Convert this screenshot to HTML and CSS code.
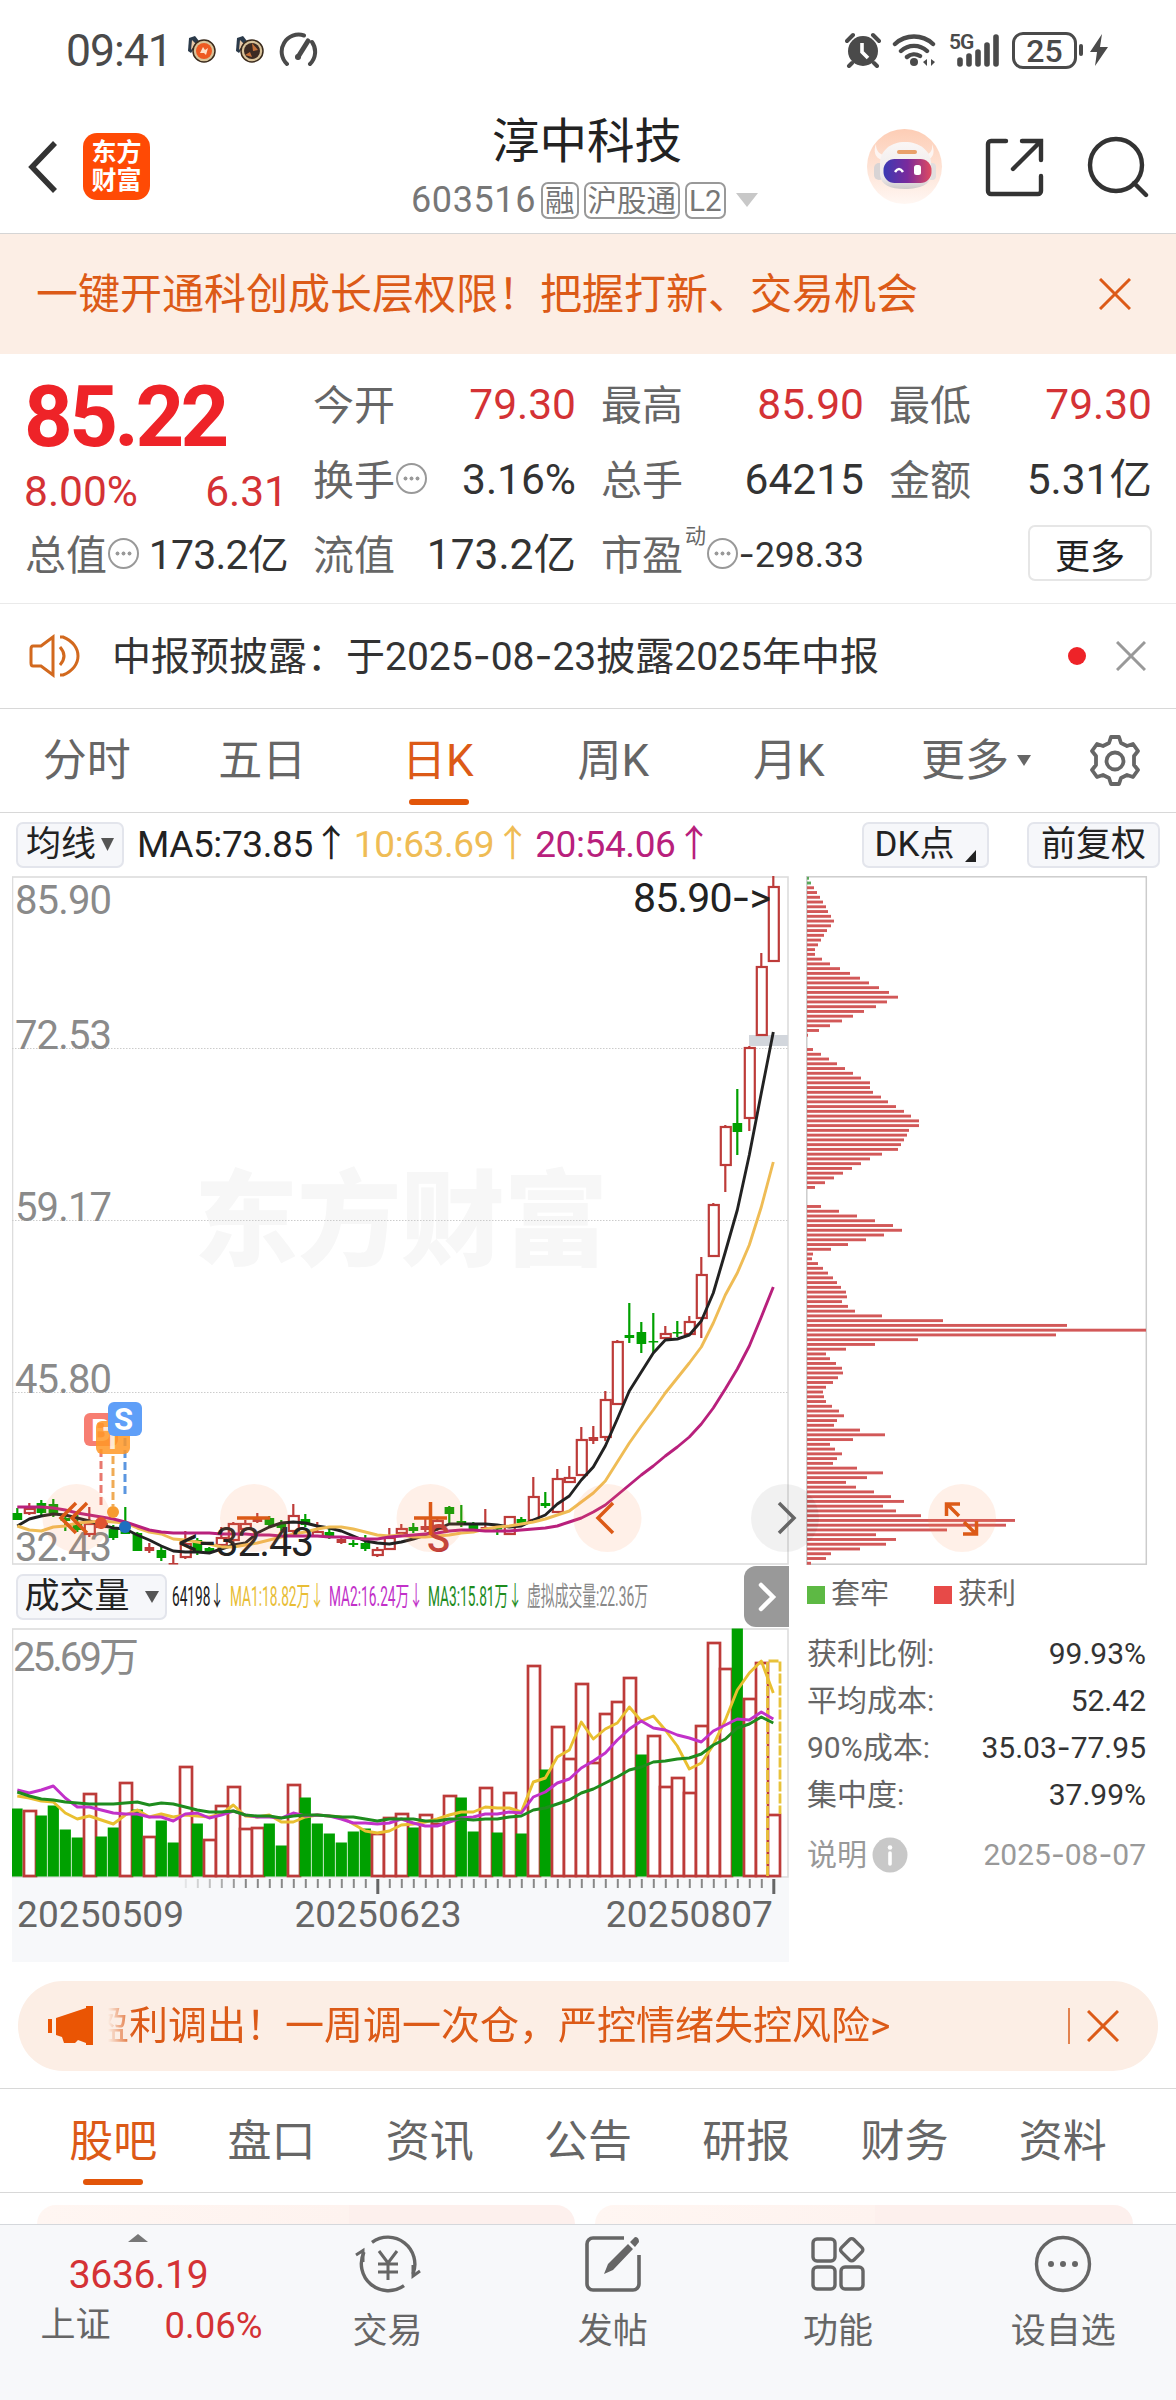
FILE: index.html
```
<!DOCTYPE html>
<html lang="zh-CN">
<head>
    <meta charset="UTF-8">
    <meta name="viewport" content="width=device-width, initial-scale=1.0">
    <title>淳中科技 603516</title>
    <link rel="stylesheet" href="styles.css">
</head>
<body>
    <div class="status-bar">
        <span class="time">09:41</span>
        <svg class="app-icon" width="30" height="28" viewBox="0 0 30 28">
            <path d="M2 2l6-2 4 5-8 12-3-2z" fill="#2b3a4a"/><path d="M5 4l4 4-5 6z" fill="#e8c9a8"/>
            <circle cx="17" cy="15" r="11" fill="#d9c39a" stroke="#3a2a1c" stroke-width="1.5"/>
            <circle cx="17" cy="15" r="8" fill="#ee5a22"/><path d="M13 17l3-6 2 3 3-2-2 7-2-2z" fill="#ffe0c8"/>
        </svg>
        <svg class="app-icon" width="30" height="28" viewBox="0 0 30 28">
            <path d="M2 2l6-2 4 5-8 12-3-2z" fill="#2b3a4a"/><path d="M5 4l4 4-5 6z" fill="#e8c9a8"/>
            <circle cx="17" cy="15" r="11" fill="#d9c39a" stroke="#3a2a1c" stroke-width="1.5"/>
            <circle cx="17" cy="15" r="8" fill="#3c2a22"/><path d="M10 19l5-3 2 5zM17 7l6 7-5 1z" fill="#c5713a"/>
        </svg>
        <svg width="40" height="36" viewBox="0 0 40 36" fill="none" stroke="#4a4a4a" stroke-width="4" stroke-linecap="round">
            <path d="M8 32A17 17 0 0 1 25 3.5M33 10a17 17 0 0 1-2 22"/><path d="M29 9L19 25" stroke-width="5"/><circle cx="19" cy="25" r="3" fill="#4a4a4a" stroke="none"/>
        </svg>
        <div class="status-right">
            <svg width="36" height="36" viewBox="0 0 36 36">
                <circle cx="18" cy="19" r="15" fill="#4a4a4a"/><path d="M2 9l6-6M34 9l-6-6M7 31l-3 3M29 31l3 3" stroke="#4a4a4a" stroke-width="4" stroke-linecap="round"/>
                <path d="M17 11v9l6 6" fill="none" stroke="#fff" stroke-width="3.6"/>
            </svg>
            <svg width="46" height="36" viewBox="0 0 46 36" fill="none" stroke="#4a4a4a" stroke-width="4.4" stroke-linecap="round">
                <path d="M3 12a28 28 0 0 1 38 0M9 19a19 19 0 0 1 26 0M15 25a11 11 0 0 1 13-1"/><circle cx="22" cy="30" r="4" fill="#4a4a4a" stroke="none"/>
                <path d="M31 30l4-3v7zM43 30l-4-3v7z" fill="#4a4a4a" stroke="none"/>
            </svg>
            <div class="signal">
                <span class="net">5G</span>
                <svg width="54" height="36" viewBox="0 0 54 36" stroke="#4a4a4a" stroke-width="5.6" stroke-linecap="round">
                    <path d="M13 28v4M22 24v8M31 20v12M40 13v19M49 5v27"/>
                </svg>
            </div>
            <div class="battery">25</div>
            <svg width="30" height="36" viewBox="0 0 30 36"><path d="M3 14v8" stroke="#4a4a4a" stroke-width="4" stroke-linecap="round"/><path d="M24 2L12 20h7l-2 14 13-19h-8z" fill="#4a4a4a"/></svg>
        </div>
    </div>

    <header class="header">
        <svg class="back" width="30" height="54" viewBox="0 0 30 54"><path d="M27 3L4 27l23 24" fill="none" stroke="#333" stroke-width="5.5"/></svg>
        <div class="logo"><span>东方</span><span>财富</span></div>
        <div class="title">
            <h1>淳中科技</h1>
            <div class="subtitle">
                <span class="code">603516</span>
                <span class="badge">融</span>
                <span class="badge">沪股通</span>
                <span class="badge">L2</span>
                <svg width="22" height="14" viewBox="0 0 22 14"><path d="M0 0h22L11 14z" fill="#c8c8c8"/></svg>
            </div>
        </div>
        <div class="header-actions">
            <svg width="76" height="76" viewBox="0 0 76 76">
                <defs>
                    <linearGradient id="halo" x1="0" y1="0" x2="0" y2="1"><stop offset="0" stop-color="#fdcdb5"/><stop offset="1" stop-color="#fff7f3"/></linearGradient>
                    <linearGradient id="visor" x1="0" y1="0" x2="1" y2="0"><stop offset="0" stop-color="#3a3ab4"/><stop offset=".5" stop-color="#7a2a9c"/><stop offset="1" stop-color="#e04a60"/></linearGradient>
                    <linearGradient id="head" x1="0" y1="0" x2="0" y2="1"><stop offset="0" stop-color="#faf6f5"/><stop offset=".75" stop-color="#eeeaea"/><stop offset="1" stop-color="#cfcaca"/></linearGradient>
                </defs>
                <circle cx="37.5" cy="37.5" r="37.5" fill="url(#halo)"/>
                <path d="M9 15c0 7 3 10 10 12l-4 4c-7-2-9-9-6-16zM65 15c1 7-2 10-9 12l4 4c7-2 8-9 5-16z" fill="#fdf5f2"/>
                <rect x="7" y="34" width="10" height="17" rx="5" fill="#d8d4d5"/><rect x="60" y="34" width="9" height="17" rx="4" fill="#e2dede"/>
                <path d="M38 13c14 0 25 8 26 20v13c0 9-11 14-26 14S14 56 13 46V33c1-12 11-20 25-20z" fill="url(#head)"/>
                <rect x="30" y="21" width="20" height="4" rx="2" fill="#e9a06a"/>
                <rect x="16.5" y="30" width="48" height="24" rx="11" fill="url(#visor)"/>
                <path d="M28 43q4-6 8 0" stroke="#fff" stroke-width="2.5" fill="none"/><rect x="47" y="36" width="7" height="10" rx="2.500" fill="#fff"/>
            </svg>
            <svg width="60" height="60" viewBox="0 0 60 60" fill="none" stroke="#333" stroke-width="4.4" stroke-linecap="round">
                <path d="M22 4H7a3 3 0 0 0-3 3v47a3 3 0 0 0 3 3h47a3 3 0 0 0 3-3V39"/><path d="M38 4h19v19M57 4L29 32"/>
            </svg>
            <svg width="62" height="62" viewBox="0 0 62 62" fill="none" stroke="#333" stroke-width="4.4" stroke-linecap="round"><circle cx="29" cy="29" r="26"/><path d="M47 47l12 12"/></svg>
        </div>
    </header>

    <div class="banner">
        <span>一键开通科创成长层权限！把握打新、交易机会</span>
        <svg width="32" height="32" viewBox="0 0 32 32"><path d="M1 1l30 30M31 1L1 31" stroke="#dc5a17" stroke-width="3"/></svg>
    </div>

    <section class="quote">
        <div class="price-box">
            <div class="price">85.22</div>
            <div class="change"><span>8.00%</span><span>6.31</span></div>
        </div>
        <div class="cell"><label>今开</label><b class="red">79.30</b></div>
        <div class="cell"><label>最高</label><b class="red">85.90</b></div>
        <div class="cell"><label>最低</label><b class="red">79.30</b></div>
        <div class="cell"><label>换手</label><i class="tip"></i><b>3.16%</b></div>
        <div class="cell"><label>总手</label><b>64215</b></div>
        <div class="cell"><label>金额</label><b>5.31亿</b></div>
        <div class="cell"><label>总值</label><i class="tip"></i><b class="tight">173.2亿</b></div>
        <div class="cell"><label>流值</label><b>173.2亿</b></div>
        <div class="cell"><label>市盈</label><sup>动</sup><i class="tip"></i><b class="small"><s>-</s>298.33</b></div>
        <div class="cell end"><button class="more-btn">更多</button></div>
    </section>

    <div class="notice">
        <svg width="52" height="44" viewBox="0 0 52 44" fill="none" stroke="#d2691e" stroke-width="3">
            <path d="M24 3L12 12H4q-2 0-2 3v14q0 3 2 3h8l12 9z"/><path d="M31 13q8 9 0 18M31 3h3c20 8 20 30 0 38h-3"/>
        </svg>
        <span class="notice-text">中报预披露：于2025<s>-</s>08<s>-</s>23披露2025年中报</span>
        <i class="dot"></i>
        <svg width="30" height="30" viewBox="0 0 30 30"><path d="M1 1l28 28M29 1L1 29" stroke="#999" stroke-width="3"/></svg>
    </div>

    <nav class="period-tabs">
        <span>分时</span>
        <span>五日</span>
        <span class="active">日K</span>
        <span>周K</span>
        <span>月K</span>
        <span class="wide">更多<svg width="14" height="11" viewBox="0 0 14 11"><path d="M0 0h14L7 11z" fill="#666"/></svg></span>
        <svg class="gear" width="54" height="54" viewBox="0 0 54 54" fill="none" stroke="#666" stroke-width="3.8" stroke-linejoin="round">
            <path d="M23 3h8l2 6 6 3 6-2 5 7-4 5v9l4 5-5 7-6-2-6 3-2 6h-8l-2-6-6-3-6 2-5-7 4-5v-9l-4-5 5-7 6 2 6-3z"/><circle cx="27" cy="27" r="8.5"/>
        </svg>
    </nav>

    <div class="ma-row">
        <button class="chip-btn ma-btn">均线<svg width="13" height="13" viewBox="0 0 13 13"><path d="M0 0h13L6.500 13z" fill="#555"/></svg></button>
        <span class="ma ma5">MA5:73.85<u>↑</u></span>
        <span class="ma ma10">10:63.69<u>↑</u></span>
        <span class="ma ma20">20:54.06<u>↑</u></span>
        <button class="chip-btn dk-btn">DK点<svg width="11" height="12" viewBox="0 0 11 12"><path d="M11 0v12H0z" fill="#222"/></svg></button>
        <button class="chip-btn fq-btn">前复权</button>
    </div>

    <div class="charts">
        <div class="left">
            <svg id="kline" width="777" height="689" viewBox="0 0 777 689"></svg>
            <div class="vol-head">
                <button class="chip-btn vol-btn">成交量<svg width="14" height="12" viewBox="0 0 14 12"><path d="M0 0h14L7 12z" fill="#555"/></svg></button>
                <svg class="vol-info" width="500" height="40" viewBox="0 0 500 40">
                    <text x="0" y="29" textLength="52" lengthAdjust="spacingAndGlyphs" fill="#222">64198↓</text>
                    <text x="58" y="29" textLength="94" lengthAdjust="spacingAndGlyphs" fill="#e8bd35">MA1:18.82万↓</text>
                    <text x="157" y="29" textLength="94" lengthAdjust="spacingAndGlyphs" fill="#c231c9">MA2:16.24万↓</text>
                    <text x="256" y="29" textLength="94" lengthAdjust="spacingAndGlyphs" fill="#1e8c1e">MA3:15.81万↓</text>
                    <text x="355" y="29" textLength="121" lengthAdjust="spacingAndGlyphs" fill="#888">虚拟成交量:22.36万</text>
                </svg>
                <div class="next"><svg width="20" height="30" viewBox="0 0 20 30"><path d="M4 3l12 12L4 27" fill="none" stroke="#fff" stroke-width="4.500" stroke-linecap="round"/></svg></div>
            </div>
            <svg id="volume" width="777" height="250" viewBox="0 0 777 250"></svg>
            <div class="dates">
                <svg id="ticks" width="777" height="18" viewBox="0 0 777 18"></svg>
                <div class="date-labels"><span>20250509</span><span>20250623</span><span>20250807</span></div>
            </div>
        </div>
        <div class="right">
            <svg id="chips" width="342" height="689" viewBox="0 0 342 689"></svg>
            <div class="legend"><i class="g"></i><span>套牢</span><i class="r"></i><span>获利</span></div>
            <div class="stat"><label>获利比例:</label><span>99.93%</span></div>
            <div class="stat"><label>平均成本:</label><span>52.42</span></div>
            <div class="stat"><label>90%成本:</label><span>35.03<s>-</s>77.95</span></div>
            <div class="stat"><label>集中度:</label><span>37.99%</span></div>
            <div class="stat note"><label>说明</label><svg width="36" height="36" viewBox="0 0 36 36"><circle cx="18" cy="18" r="17.500" fill="#c8c8c8"/><circle cx="18" cy="10.500" r="2.300" fill="#fff"/><path d="M18 16v11" stroke="#fff" stroke-width="3.600" stroke-linecap="round"/></svg><span>2025<s>-</s>08<s>-</s>07</span></div>
        </div>
        <!-- floating chart controls -->
        <svg class="controls" width="1176" height="80" viewBox="0 0 1176 80" fill="none" stroke="#dc5a17" stroke-width="3.500">
            <g fill="#ff8a4c" fill-opacity=".13" stroke="none">
                <circle cx="76.500" cy="40" r="34"/><circle cx="254" cy="40" r="34"/><circle cx="430.500" cy="40" r="34"/><circle cx="607.500" cy="40" r="34"/><circle cx="962" cy="40" r="34"/>
                <circle cx="785" cy="40" r="34" fill="#000" fill-opacity=".055"/>
            </g>
            <path d="M76 25L61 40l15 15M87 25L72 40l15 15M237 40h33M414 40h33M430.500 24v33M613 25l-15 15 15 15"/>
            <path d="M779 25l15 15-15 15" stroke="#666"/>
            <path d="M946.500 38V26H960M947 26l12 12M964 44l12 12M963 56h13.500V43" stroke-width="3.500"/>
        </svg>
    </div>

    <div class="promo">
        <svg width="48" height="40" viewBox="0 0 48 40" fill="#ea5504"><path d="M0 13h4v14H0zM8 12L38 2V0h7v39h-7v-2l-8-3-3 3H16l-2-6-6-2z"/></svg>
        <div class="promo-text"><span>盈利调出！一周调一次仓，严控情绪失控风险&gt;</span></div>
        <i class="divider"></i>
        <svg width="32" height="32" viewBox="0 0 32 32"><path d="M1 1l30 30M31 1L1 31" stroke="#dc5a17" stroke-width="3"/></svg>
    </div>

    <nav class="info-tabs">
        <span class="active">股吧</span>
        <span>盘口</span>
        <span>资讯</span>
        <span>公告</span>
        <span>研报</span>
        <span>财务</span>
        <span>资料</span>
    </nav>

    <div class="cards"><div class="card"></div><div class="card"></div></div>

    <footer class="bottom-bar">
        <div class="index">
            <svg width="20" height="8" viewBox="0 0 20 8"><path d="M10 0l10 8H0z" fill="#777"/></svg>
            <div class="index-value">3636.19</div>
            <div class="index-row"><label>上证</label><span>0.06%</span></div>
        </div>
        <div class="item">
            <svg width="66" height="58" viewBox="0 0 66 58" fill="none" stroke="#666" stroke-width="3.400">
                <path d="M17 7.300A27 27 0 0 1 58 39M49 50.700A27 27 0 0 1 9 17"/><path d="M1 20l7-4.500V27M65 36l-7 5V30" stroke-width="3"/><path d="M24 16l9 12 9-12M33 28v17M23 29h20M23 37h20" stroke-width="3"/>
            </svg>
            <span>交易</span>
        </div>
        <div class="item">
            <svg width="58" height="58" viewBox="0 0 58 58" fill="none" stroke="#666" stroke-width="3.600">
                <path d="M40 3H9a6 6 0 0 0-6 6v40a6 6 0 0 0 6 6h40a6 6 0 0 0 6-6V20"/>
                <path d="M20 39l4-10 20-20 5 5-20 21zM46 7l5-5q4 0 4 5l-4 5z" fill="#666" stroke="none"/>
            </svg>
            <span>发帖</span>
        </div>
        <div class="item">
            <svg width="54" height="54" viewBox="0 0 54 54" fill="none" stroke="#666" stroke-width="3.400">
                <rect x="2" y="2" width="22" height="22" rx="4"/><rect x="2" y="30" width="22" height="22" rx="4"/><rect x="30" y="30" width="22" height="22" rx="4"/><rect x="32" y="4" width="17.500" height="17.500" rx="3" transform="rotate(45 40.700 12.700)"/>
            </svg>
            <span>功能</span>
        </div>
        <div class="item">
            <svg width="58" height="58" viewBox="0 0 58 58"><circle cx="29" cy="29" r="26.500" fill="none" stroke="#666" stroke-width="3.400"/><g fill="#666"><circle cx="17" cy="29" r="3"/><circle cx="29" cy="29" r="3"/><circle cx="41" cy="29" r="3"/></g></svg>
            <span>设自选</span>
        </div>
    </footer>

    <script>
        const RED = '#bd3b39', GREEN = '#00a000';
        const STEP = 12, X0 = 5.3;
        const cx = i => X0 + STEP * i;

        // [direction, high, body top, body bottom, low]
        const candles = [
            ['g',632,637,644,644],['r',627,632,637,639],['g',624,627,637,639],['g',623,628,637,641],['g',640,642,645,655],
            ['g',639,647,654,656],['r',631,647,658,661],['r',642,646,651,653],['g',649,653,662,664],['g',631,651,658,658],
            ['g',656,657,675,675],['r',667,671,675,677],['g',671,674,682,685],['r',679,687,688,688],['r',655,667,681,683],
            ['g',662,664,677,679],['g',671,672,676,677],['r',651,661,669,671],['r',646,647,664,667],['r',644,647,653,655],
            ['r',637,643,646,647],['g',640,642,649,651],['g',644,647,652,655],['r',628,639,655,657],['g',638,643,649,651],
            ['r',646,655,660,661],['g',653,656,660,663],['r',661,663,667,668],['g',664,667,669,671],['g',659,667,673,675],
            ['r',671,673,679,681],['r',652,661,673,673],['r',648,652,657,659],['g',647,651,655,657],['r',641,650,654,656],
            ['r',641,644,653,655],['g',630,631,638,648],['g',629,645,649,651],['g',646,649,653,655],['r',633,651,652,653],
            ['g',651,652,653,659],['r',640,640,658,659],['g',641,643,647,648],['r',601,620,644,647],['g',616,627,630,632],
            ['r',593,602,636,637],['r',590,601,606,607],['r',551,563,599,600],['r',550,561,565,568],['r',515,523,561,565],
            ['r',464,465,528,528],['g',427,459,462,467],['g',446,456,468,477],['g',437,465,466,477],['r',450,457,462,463],
            ['g',445,456,457,461],['r',440,445,458,459],['r',381,398,442,462],['r',327,328,380,380],['r',249,250,289,316],
            ['g',213,247,256,279],['r',170,171,242,255],['r',77,90,159,159],['r',0,10,85,85]
        ];

        const ma5 = [650,643,640,638,639,642,645,649,652,653,659,664,670,675,676,676,677,673,669,667,657,651,647,646,647,650,652,655,660,665,667,668,666,663,659,653,648,648,648,648,649,651,650,644,639,628,620,604,591,570,543,515,496,477,464,463,459,445,417,376,334,279,217,156];
        const ma10 = [650,654,655,651,650,647,646,645,646,647,652,656,658,663,664,666,668,671,671,669,667,664,661,658,656,653,651,651,653,656,659,660,659,661,661,660,659,657,656,653,651,650,648,646,643,639,635,626,617,605,586,567,550,534,517,502,487,471,447,419,397,369,331,286];
        const ma20 = [631,631,631,632,634,637,639,641,643,646,650,654,656,657,657,657,657,658,658,658,659,659,660,660,660,660,661,661,662,663,663,661,660,659,658,657,655,654,654,655,655,655,654,653,652,650,646,642,636,629,619,609,599,590,580,571,561,548,532,513,493,470,441,411];

        const volColors = 'grggggrggrgrggrgrrrrrggrggggggrrrgrrrggrgrgrgrrrrrrrgrrrrrrrgrrr';
        const volumes = [68,66,61,71,47,39,83,40,49,94,67,40,56,34,110,53,37,71,90,48,49,53,31,92,79,53,43,34,45,48,43,59,63,49,62,53,81,79,45,89,44,84,43,211,107,150,118,193,114,163,175,199,122,141,90,99,84,151,234,208,248,178,214,62];
        const vma1 = [168,170,173,174,185,191,188,192,196,187,182,189,186,189,187,188,189,186,177,188,189,187,194,194,189,187,188,189,196,203,205,203,197,196,194,191,187,184,184,179,180,180,184,154,150,129,122,94,111,101,95,79,93,88,102,118,141,135,117,92,62,45,33,65];
        const vma2 = [162,165,162,158,170,179,179,182,185,186,186,189,189,193,186,185,190,187,183,187,189,189,190,185,188,187,188,191,195,195,196,195,191,195,198,198,194,190,189,186,186,184,185,169,164,155,151,140,133,125,112,101,93,100,102,107,110,114,103,97,91,92,84,91];
        const vma3 = [164,168,171,172,174,175,176,176,176,175,174,177,175,176,179,182,184,184,183,187,188,188,190,188,187,187,188,189,189,191,193,191,191,191,193,193,191,191,192,191,191,189,188,182,180,176,172,165,161,155,149,142,139,134,133,131,130,126,117,111,100,96,89,95];

        const chips = [2,4,7,10,13,16,19,21,24,27,24,20,17,14,11,8,8,15,23,33,43,53,62,72,82,91,80,69,57,46,35,23,12,1,0,0,6,14,22,30,38,46,54,63,63,66,74,81,89,97,104,112,112,102,100,97,94,91,75,63,54,45,36,27,18,8,0,0,0,14,32,50,68,86,95,77,59,41,24,6,5,11,16,21,26,30,34,39,40,35,41,48,75,136,260,339,249,111,68,39,19,23,29,35,36,31,26,19,16,17,19,25,32,37,30,27,53,78,46,23,28,35,30,26,50,76,60,39,49,67,84,97,76,89,114,208,199,140,69,89,79,53,24,19,4];

        function line(data, color) {
            const pts = data.map((y, i) => `${cx(i)},${y}`).join(' ');
            return `<polyline points="${pts}" fill="none" stroke="${color}" stroke-width="2.900" stroke-linejoin="round"/>`;
        }

        function drawKline() {
            let s = '<text class="watermark" x="182" y="382" textLength="414">东方财富</text>';
            s += '<rect x=".5" y="1" width="775.5" height="687" fill="none" stroke="#ddd" stroke-width="1.6"/>';
            [172, 344, 516].forEach(y => {
                s += `<path d="M0 ${y}.5H776" stroke="#ccc" stroke-dasharray="1.5 1.5"/>`;
            });
            s += '<rect x="737" y="159" width="39" height="11" fill="#d2d6dc"/>';
            [['85.90', 38], ['72.53', 173], ['59.17', 345], ['45.80', 517], ['32.43', 685]].forEach(([t, y]) => {
                s += `<text class="axis" x="3" y="${y}" textLength="97">${t}</text>`;
            });
            candles.forEach(([d, h, t, b, l], i) => {
                const x = cx(i), color = d === 'r' ? RED : GREEN;
                s += `<path d="M${x} ${h}V${t}M${x} ${b}V${l}" stroke="${color}" stroke-width="2.200"/>`;
                if (d === 'r' && b - t > 4) {
                    s += `<rect x="${x - 4.5}" y="${t + 1}" width="10" height="${b - t - 1}" fill="#fff" stroke="${RED}" stroke-width="2.200"/>`;
                } else {
                    s += `<rect x="${x - 4.7}" y="${t}" width="9.600" height="${Math.max(b - t, 1.5)}" fill="${color}"/>`;
                }
            });
            s += line(ma5, '#222') + line(ma10, '#efbc55') + line(ma20, '#b8207c');
            s += '<text class="mark" x="621" y="36" textLength="138">85.90<tspan class="dash">-</tspan>&gt;</text>';
            s += '<text class="mark" x="166" y="680" textLength="136">&lt;<tspan class="dash">-</tspan>32.43</text>';
            s += '<text class="sell" x="415" y="676">S</text>';
            // trade markers
            s += '<g stroke-width="3" stroke-dasharray="8 4"><path d="M89 573v56" stroke="#e8796f"/><path d="M101 580v50" stroke="#f0ab55"/><path d="M113 562v56" stroke="#5b96e0"/></g>';
            s += '<circle cx="89" cy="647" r="6" fill="#dd4b2c"/><circle cx="101" cy="636" r="6" fill="#f79c30"/><circle cx="113" cy="651" r="6" fill="#1f6fc0"/>';
            s += '<rect x="72" y="537" width="34" height="33" rx="6" fill="#f77e72"/><text class="tag" x="79" y="565">B</text>';
            s += '<rect x="84" y="545" width="34" height="33" rx="6" fill="#ff9826" fill-opacity=".85"/><text class="tag faint" x="91" y="573">T</text>';
            s += '<rect x="96" y="526" width="34" height="34" rx="6" fill="#5f9ff8"/><text class="tag" x="102" y="554">S</text>';
            document.getElementById('kline').innerHTML = s;
        }

        function drawVolume() {
            let s = '<rect x=".5" y="1" width="775.5" height="248" fill="none" stroke="#ddd" stroke-width="1.6"/>';
            volumes.forEach((h, i) => {
                const x = cx(i);
                if (volColors[i] === 'g') {
                    s += `<rect x="${Math.max(x - 5.6, 0)}" y="${248.500 - h}" width="${i ? 11.2 : 10.6}" height="${h}" fill="${GREEN}"/>`;
                } else {
                    s += `<rect x="${x - 5.3}" y="${249 - h}" width="12" height="${h - 1}" fill="#fff" stroke="${RED}" stroke-width="2.700"/>`;
                }
            });
            // projected volume of the current day
            s += '<path d="M755.500 248V33H768V186" fill="none" stroke="#e8c23a" stroke-width="2.800" stroke-dasharray="10 2"/>';
            s += line(vma1, '#e9bf30') + line(vma2, '#c231c9') + line(vma3, '#1e8c1e');
            s += '<text class="axis" x="1" y="43" textLength="126">25.69万</text>';
            document.getElementById('volume').innerHTML = s;

            let t = '';
            for (let i = 14; i < 64; i++) {
                const major = i === 30 || i === 63;
                const opacity = Math.min(1, (i - 13) / 6);
                t += `<path d="M${cx(i) + 0.5} 1v${major ? 15 : 9}" stroke="${major ? '#666' : '#888'}" stroke-width="${major ? 3 : 2}" opacity="${opacity}"/>`;
            }
            document.getElementById('ticks').innerHTML = t;
        }

        function drawChips() {
            let s = '<rect x=".800" y=".800" width="339.500" height="687.400" fill="none" stroke="#ccc" stroke-width="1.500"/>';
            chips.forEach((w, i) => {
                if (!w) return;
                s += `<rect x="1" y="${(i * 4.757 + 0.8).toFixed(2)}" width="${w}" height="2.900" fill="${i < 2 ? '#5ba85b' : '#d25858'}"/>`;
            });
            document.getElementById('chips').innerHTML = s;
        }

        drawKline();
        drawVolume();
        drawChips();
    </script>
</body>
</html>
```
FILE: styles.css
```
* {
    box-sizing: border-box;
}

body {
    margin: 0;
    width: 1176px;
    height: 2400px;
    overflow: hidden;
    background: #fff;
    color: #333;
    font-family: Roboto, "Noto Sans CJK SC", sans-serif;
    line-height: 1;
}

svg {
    display: block;
    flex: none;
}

button {
    font-family: inherit;
    padding: 0;
    color: #222;
}

b, i {
    font-weight: normal;
    font-style: normal;
}

/* wider hyphen than the one in Roboto */
s,
.dash {
    font-family: Inter, sans-serif;
    text-decoration: none;
}

span, label {
    white-space: nowrap;
}

/* status bar */
.status-bar {
    height: 100px;
    padding: 0 68px 0 66px;
    display: flex;
    align-items: center;
}

.time {
    font-size: 44.5px;
    letter-spacing: -1px;
    color: #4a4a4a;
    width: 121px;
    padding-top: 2px;
}

.app-icon {
    margin-right: 18px;
}

.app-icon + .app-icon {
    margin-right: 14px;
}

.status-right {
    margin-left: auto;
    display: flex;
    align-items: center;
    gap: 11px;
}

.signal {
    position: relative;
    margin-left: -2px;
}

.net {
    position: absolute;
    left: 2px;
    top: 0;
    font-size: 21px;
    font-weight: 600;
    letter-spacing: -1px;
    color: #4a4a4a;
}

.battery {
    width: 65px;
    height: 37px;
    line-height: 33px;
    border: 3px solid #4a4a4a;
    border-radius: 11px;
    text-align: center;
    font-size: 32px;
    font-weight: 500;
    color: #4a4a4a;
}

.status-right .battery + svg {
    margin-left: -10px;
}

/* header */
.header {
    height: 134px;
    border-bottom: 1px solid #d5d5d5;
    display: grid;
    grid-template-columns: 57px 354px 352px 1fr;
    align-items: center;
}

.back {
    margin-left: 28px;
}

.logo {
    width: 67px;
    height: 67px;
    margin-left: 26px;
    border-radius: 14px;
    background: #ff4a05;
    color: #fff;
    font-size: 25px;
    font-weight: 700;
    line-height: 28px;
    display: flex;
    flex-direction: column;
    align-items: center;
    justify-content: center;
}

.title {
    align-self: start;
    padding-top: 15px;
}

h1 {
    margin: 0;
    font-size: 47.5px;
    line-height: 54px;
    font-weight: 400;
    color: #222;
    text-align: center;
}

.subtitle {
    display: flex;
    align-items: center;
    height: 36px;
    margin-top: 13px;
    white-space: nowrap;
}

.code {
    font-size: 36px;
    letter-spacing: 0.6px;
    color: #777;
    margin-right: 5px;
}

.badge {
    height: 37px;
    line-height: 34px;
    border: 2px solid #999;
    border-radius: 7px;
    padding: 0 2px;
    margin-right: 5px;
    font-size: 29.5px;
    color: #777;
}

.subtitle svg {
    margin-left: 5px;
}

.header-actions {
    display: flex;
    align-items: center;
    margin-left: 104px;
}

.header-actions svg + svg {
    margin-left: 41px;
}

.header-actions svg:last-child {
    margin-left: 43px;
}

/* banner */
.banner {
    height: 120px;
    background: #fceee5;
    display: flex;
    align-items: center;
    justify-content: space-between;
    padding: 0 45px 0 36px;
    font-size: 42px;
    color: #dc5a17;
}

.banner span {
    padding-top: 2px;
}

/* quote */
.quote {
    height: 250px;
    border-bottom: 1px solid #eaeaea;
    padding: 14px 24px 0 25px;
    display: grid;
    grid-template-columns: repeat(4, 1fr);
    grid-template-rows: repeat(3, 75px);
    column-gap: 25px;
}

.price-box {
    grid-row: span 2;
    color: #ee2328;
}

.price {
    margin: 9px 0 0 -1px;
    font-size: 85px;
    line-height: 80px;
    font-weight: 700;
    letter-spacing: -3.6px;
}

.change {
    display: flex;
    justify-content: space-between;
    margin: 14px 0 0 -1px;
    font-size: 42.5px;
    color: #d43235;
}

.cell {
    display: flex;
    align-items: center;
    font-size: 42.5px;
}

.cell label {
    font-size: 41px;
    color: #666;
    padding-top: 1px;
}

.cell b {
    margin-left: auto;
}

.cell .red {
    color: #d43235;
}

.cell .small {
    font-size: 35.5px;
}

.cell .tight {
    font-size: 41px;
    letter-spacing: -0.8px;
}

.cell.end {
    justify-content: flex-end;
}

.cell sup {
    font-size: 21px;
    color: #666;
    margin: -38px 0 0 2px;
}

.tip {
    width: 31px;
    height: 31px;
    margin: -4px 0 0 1px;
    border: 2px solid #999;
    border-radius: 50%;
    background: radial-gradient(circle, #999 1.7px, transparent 2.3px) 50% 50% / 7px 7px no-repeat,
        radial-gradient(circle, #999 1.7px, transparent 2.3px) 4px 50% / 7px 7px no-repeat,
        radial-gradient(circle, #999 1.7px, transparent 2.3px) 16px 50% / 7px 7px no-repeat;
}

.more-btn {
    width: 124px;
    height: 56px;
    margin-top: -5px;
    border: 2px solid #e6e6e6;
    border-radius: 7px;
    background: #fff;
    font-size: 35px;
}

/* notice */
.notice {
    height: 105px;
    border-bottom: 1px solid #d8d8d8;
    padding: 0 30px 0 29px;
    display: flex;
    align-items: center;
}

.notice-text {
    margin-left: 31px;
    font-size: 39px;
    color: #333;
}

.dot {
    width: 18px;
    height: 18px;
    margin: 0 30px 0 auto;
    border-radius: 50%;
    background: #ee2328;
}

/* period tabs */
.period-tabs {
    height: 104px;
    border-bottom: 1px solid #d8d8d8;
    display: flex;
    align-items: center;
    font-size: 44px;
    color: #666;
}

.period-tabs span {
    position: relative;
    width: 175.500px;
    padding-right: 2px;
    line-height: 104px;
    text-align: center;
}

.period-tabs span:not(.wide) + .wide {
    width: 196px;
    padding-left: 3px;
    display: flex;
    align-items: center;
    justify-content: center;
    gap: 8px;
}

.period-tabs .gear {
    margin-left: 14px;
}

.active {
    color: #dc5a17 !important;
}

.active::after {
    content: "";
    position: absolute;
    left: 50%;
    bottom: 8px;
    width: 60px;
    height: 6px;
    margin-left: -30px;
    border-radius: 3px;
    background: #e25509;
}

/* moving averages */
.ma-row {
    height: 63px;
    padding: 0 16px;
    display: flex;
    align-items: center;
}

.chip-btn {
    height: 46px;
    border: 2px solid #e3e5ec;
    border-radius: 7px;
    background: #f6f7fa;
    font-size: 35px;
    line-height: 40px;
    display: flex;
    align-items: center;
    justify-content: center;
    white-space: nowrap;
}

.ma-btn {
    width: 108px;
    gap: 5px;
    margin-right: 13px;
}

.ma {
    font-size: 37px;
    letter-spacing: -0.4px;
}

.ma u {
    text-decoration: none;
    display: inline-block;
    width: 37px;
    margin-right: 4px;
}

.ma5 {
    color: #222;
}

.ma10 {
    color: #efbc55;
}

.ma20 {
    color: #b8207c;
}

.dk-btn {
    width: 127px;
    margin-left: auto;
    gap: 11px;
}

.dk-btn svg {
    align-self: flex-end;
    margin-bottom: 4px;
}

.fq-btn {
    width: 133px;
    margin-left: 38px;
}

/* charts */
.charts {
    position: relative;
    height: 1086px;
    padding-left: 12px;
    display: flex;
}

.left {
    width: 777px;
}

.axis {
    font-size: 40px;
    fill: #8a8a8a;
}

.mark {
    font-size: 41px;
    fill: #222;
}

.sell {
    font-size: 38px;
    font-weight: 500;
    fill: #bd3b39;
}

.tag {
    font-size: 31px;
    font-weight: 700;
    fill: #fff;
}

.faint {
    fill-opacity: 0.8;
}

.watermark {
    font-size: 104px;
    font-weight: 900;
    fill: #f7f7f7;
}

.vol-head {
    height: 63px;
    display: flex;
    align-items: center;
    padding-left: 4px;
}

.vol-btn {
    width: 151px;
    gap: 15px;
}

.vol-info {
    margin-left: 5px;
    font-size: 27px;
}

.next {
    width: 45px;
    height: 61px;
    margin-left: auto;
    border-radius: 12px 0 0 12px;
    background: #999;
    display: flex;
    align-items: center;
    justify-content: center;
}

.dates {
    height: 84px;
    background: #f7f8fa;
}

.date-labels {
    display: flex;
    justify-content: space-between;
    padding: 0 16px 0 5px;
    font-size: 37px;
    letter-spacing: 0.1px;
    color: #666;
}

/* middle date is centred under its tick */
.date-labels span:nth-child(2) {
    margin-right: 34px;
}

.right {
    width: 342px;
    margin-left: 17px;
}

.legend {
    display: flex;
    align-items: center;
    height: 59px;
    padding-left: 1px;
    font-size: 29px;
    color: #666;
}

.legend i {
    width: 18px;
    height: 18px;
    margin-right: 6px;
}

.legend .g {
    background: #5db944;
}

.legend .r {
    background: #e74a48;
    margin-left: 45px;
}

.stat {
    height: 47px;
    padding: 0 2px 0 1px;
    display: flex;
    align-items: center;
    font-size: 30px;
}

.legend + .stat {
    margin-top: 6px;
}

.stat label {
    font-size: 30px;
    color: #666;
}

.stat span {
    margin-left: auto;
}

.note,
.note label {
    color: #999;
}

.note {
    margin-top: 13px;
}

.note svg {
    margin-left: 5px;
}

.controls {
    position: absolute;
    left: 0;
    top: 602px;
}

/* promo */
.promo {
    height: 90px;
    margin: 19px 18px 17px;
    padding: 0 39px 0 30px;
    border-radius: 45px;
    background: #fceee5;
    display: flex;
    align-items: center;
    font-size: 39px;
    color: #dc5a17;
}

.promo-text {
    width: 900px;
    margin-left: 12px;
    height: 60px;
    line-height: 60px;
    display: flex;
    overflow: hidden;
    -webkit-mask-image: linear-gradient(90deg, transparent, #000 26px);
    mask-image: linear-gradient(90deg, transparent, #000 26px);
}

.promo-text span {
    margin-left: -18px;
}

.divider {
    width: 2px;
    height: 36px;
    margin: 0 17px 0 auto;
    background: #e2824f;
}

/* info tabs */
.info-tabs {
    height: 105px;
    border-top: 1px solid #d8d8d8;
    border-bottom: 1px solid #d8d8d8;
    padding: 0 34px;
    display: flex;
    font-size: 44px;
    color: #666;
}

.info-tabs span {
    position: relative;
    flex: 1;
    text-align: center;
    line-height: 106px;
    height: 104px;
}

.cards {
    height: 31px;
    padding: 12px 43px 0 37px;
    display: flex;
    gap: 20px;
}

.card {
    flex: 1;
    border-radius: 24px 24px 0 0;
    background: linear-gradient(90deg, #fff6f2, #fef3ef 58%, #fdf0ed 58%);
}

.card + .card {
    background: linear-gradient(90deg, #fff6f2, #fef3ef 52%, #fdf0ed 52%);
}

/* bottom bar */
.bottom-bar {
    height: 176px;
    border-top: 1px solid #d5d8dc;
    background: #f7f8fa;
    display: flex;
    color: #666;
    font-size: 35px;
}

.index {
    width: 275px;
    padding-top: 9px;
    display: flex;
    flex-direction: column;
    align-items: center;
    color: #d43235;
}

.index-value {
    margin: 13px 0 0 2px;
    font-size: 39px;
    line-height: 41px;
    letter-spacing: -0.3px;
}

.index-row {
    width: 222px;
    margin: 11px 0 0 28px;
    line-height: 38px;
    display: flex;
    align-items: center;
    justify-content: space-between;
    font-size: 36.5px;
}

.index-row label {
    font-size: 35px;
    color: #666;
}

.item {
    flex: 1;
    display: flex;
    flex-direction: column;
    align-items: center;
}

.item svg {
    height: 58px;
    margin-top: 10px;
    margin-bottom: 19px;
}

.item span {
    line-height: 40px;
}
```
